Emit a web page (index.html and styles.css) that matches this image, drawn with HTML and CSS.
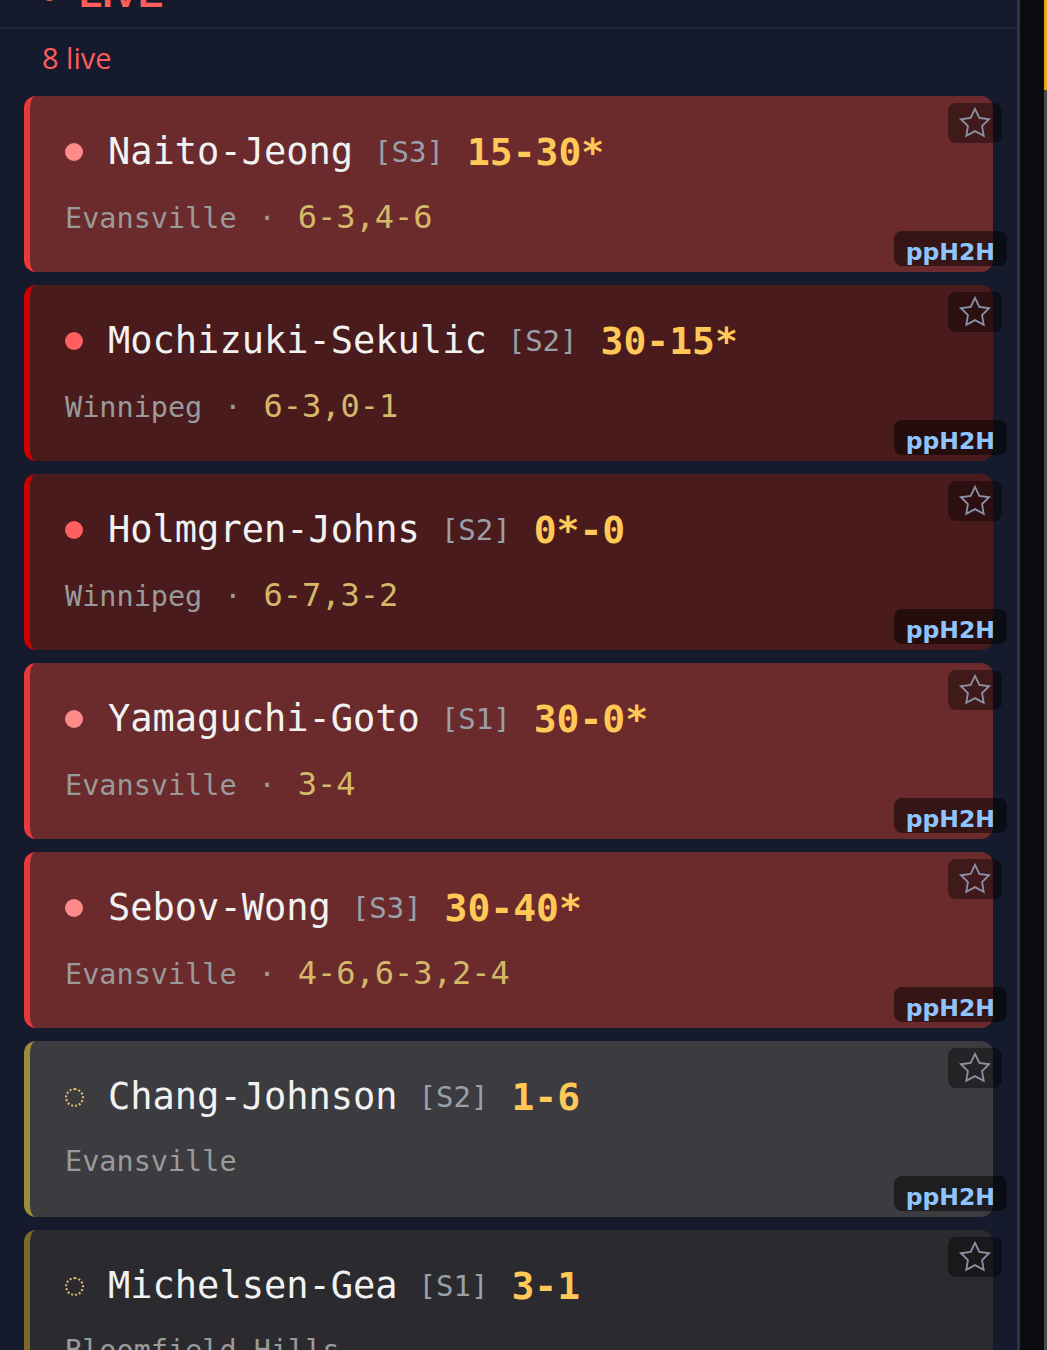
FILE: index.html
```html
<!DOCTYPE html>
<html lang="en">
<head>
  <meta charset="UTF-8">
  <meta name="viewport" content="width=device-width, initial-scale=1.0">
  <title>Live matches</title>
  <link rel="stylesheet" href="styles.css">
</head>
<body>
  <div class="panel">
    <header class="live-header">
      <span class="header-dot"></span>
      <span class="header-title">LIVE</span>
    </header>

    <div class="live-count">8 live</div>

    <div class="match-list">
      <div class="match live">
        <div class="match-title">
          <span class="dot"></span>
          <span class="teams">Naito-Jeong</span>
          <span class="set">[S3]</span>
          <span class="score">15-30*</span>
        </div>
        <div class="match-info">
          <span class="city">Evansville</span>
          <span class="sep">·</span>
          <span class="sets">6-3,4-6</span>
        </div>
        <button class="fav"><svg viewBox="0 0 24 24" width="36" height="36"><polygon points="12 2.6 14.9 8.6 21.4 9.5 16.7 14 17.8 20.5 12 17.4 6.2 20.5 7.3 14 2.6 9.5 9.1 8.6"/></svg></button>
        <div class="badge">ppH2H</div>
      </div>

      <div class="match live dark">
        <div class="match-title">
          <span class="dot"></span>
          <span class="teams">Mochizuki-Sekulic</span>
          <span class="set">[S2]</span>
          <span class="score">30-15*</span>
        </div>
        <div class="match-info">
          <span class="city">Winnipeg</span>
          <span class="sep">·</span>
          <span class="sets">6-3,0-1</span>
        </div>
        <button class="fav"><svg viewBox="0 0 24 24" width="36" height="36"><polygon points="12 2.6 14.9 8.6 21.4 9.5 16.7 14 17.8 20.5 12 17.4 6.2 20.5 7.3 14 2.6 9.5 9.1 8.6"/></svg></button>
        <div class="badge">ppH2H</div>
      </div>

      <div class="match live dark">
        <div class="match-title">
          <span class="dot"></span>
          <span class="teams">Holmgren-Johns</span>
          <span class="set">[S2]</span>
          <span class="score">0*-0</span>
        </div>
        <div class="match-info">
          <span class="city">Winnipeg</span>
          <span class="sep">·</span>
          <span class="sets">6-7,3-2</span>
        </div>
        <button class="fav"><svg viewBox="0 0 24 24" width="36" height="36"><polygon points="12 2.6 14.9 8.6 21.4 9.5 16.7 14 17.8 20.5 12 17.4 6.2 20.5 7.3 14 2.6 9.5 9.1 8.6"/></svg></button>
        <div class="badge">ppH2H</div>
      </div>

      <div class="match live">
        <div class="match-title">
          <span class="dot"></span>
          <span class="teams">Yamaguchi-Goto</span>
          <span class="set">[S1]</span>
          <span class="score">30-0*</span>
        </div>
        <div class="match-info">
          <span class="city">Evansville</span>
          <span class="sep">·</span>
          <span class="sets">3-4</span>
        </div>
        <button class="fav"><svg viewBox="0 0 24 24" width="36" height="36"><polygon points="12 2.6 14.9 8.6 21.4 9.5 16.7 14 17.8 20.5 12 17.4 6.2 20.5 7.3 14 2.6 9.5 9.1 8.6"/></svg></button>
        <div class="badge">ppH2H</div>
      </div>

      <div class="match live">
        <div class="match-title">
          <span class="dot"></span>
          <span class="teams">Sebov-Wong</span>
          <span class="set">[S3]</span>
          <span class="score">30-40*</span>
        </div>
        <div class="match-info">
          <span class="city">Evansville</span>
          <span class="sep">·</span>
          <span class="sets">4-6,6-3,2-4</span>
        </div>
        <button class="fav"><svg viewBox="0 0 24 24" width="36" height="36"><polygon points="12 2.6 14.9 8.6 21.4 9.5 16.7 14 17.8 20.5 12 17.4 6.2 20.5 7.3 14 2.6 9.5 9.1 8.6"/></svg></button>
        <div class="badge">ppH2H</div>
      </div>

      <div class="match pending">
        <div class="match-title">
          <span class="dot"></span>
          <span class="teams">Chang-Johnson</span>
          <span class="set">[S2]</span>
          <span class="score">1-6</span>
        </div>
        <div class="match-info">
          <span class="city">Evansville</span>
        </div>
        <button class="fav"><svg viewBox="0 0 24 24" width="36" height="36"><polygon points="12 2.6 14.9 8.6 21.4 9.5 16.7 14 17.8 20.5 12 17.4 6.2 20.5 7.3 14 2.6 9.5 9.1 8.6"/></svg></button>
        <div class="badge">ppH2H</div>
      </div>

      <div class="match pending dark">
        <div class="match-title">
          <span class="dot"></span>
          <span class="teams">Michelsen-Gea</span>
          <span class="set">[S1]</span>
          <span class="score">3-1</span>
        </div>
        <div class="match-info">
          <span class="city">Bloomfield Hills</span>
        </div>
        <button class="fav"><svg viewBox="0 0 24 24" width="36" height="36"><polygon points="12 2.6 14.9 8.6 21.4 9.5 16.7 14 17.8 20.5 12 17.4 6.2 20.5 7.3 14 2.6 9.5 9.1 8.6"/></svg></button>
        <div class="badge">ppH2H</div>
      </div>
    </div>
  </div>

  <div class="gutter"></div>
  <div class="scrollbar"><div class="thumb"></div></div>
</body>
</html>
```

FILE: styles.css
```css
body {
  margin: 0;
  padding: 0;
  height: 1350px;
  overflow: hidden;
  display: flex;
  background-color: #0a0b0e;
  font-family: "Open Sans", "Noto Sans", sans-serif;
}

.panel {
  width: 1017px;
  flex-shrink: 0;
  background-color: #151a2c;
  border-right: 3px solid #29324f;
  overflow: hidden;
}

.gutter {
  flex: 1;
}

.scrollbar {
  width: 3px;
  background-color: #4a4a4c;
}

.scrollbar .thumb {
  height: 90px;
  background-color: #e0a81c;
}

/* header is scrolled mostly out of view */
.live-header {
  display: flex;
  align-items: center;
  gap: 22px;
  margin-top: -26px;
  padding: 0 42px 13px;
  border-bottom: 2px solid #1f2538;
  line-height: 40px;
}

.header-dot {
  width: 15px;
  height: 15px;
  margin-top: -2px;
  border-radius: 50%;
  background-color: #ff5c5c;
}

.header-title {
  font-family: "Liberation Sans", sans-serif;
  font-weight: bold;
  font-size: 38px;
  color: #ff5c5c;
}

.live-count {
  padding: 11px 42px 0;
  font-size: 29px;
  line-height: 36px;
  color: #ff5c5c;
}

.match-list {
  display: flex;
  flex-direction: column;
  gap: 13px;
  padding: 20px 24px;
}

.match {
  position: relative;
  height: 176px;
  box-sizing: border-box;
  padding: 34px 40px 38px 35px;
  border-left: 6px solid #e83a3a;
  border-radius: 12px;
  background-color: #6b2b2d;
  font-family: "DejaVu Sans Mono", monospace;
}

.match.live.dark {
  background-color: #4a1b1d;
  border-left-color: #cc0000;
}

.match.pending {
  background-color: #3c3b40;
  border-left-color: #9c8b3a;
}

.match.pending.dark {
  background-color: #2b2a2f;
  border-left-color: #7d6a2b;
}

.match-title {
  display: flex;
  align-items: center;
  height: 44px;
  line-height: 44px;
  white-space: nowrap;
}

.dot {
  width: 18px;
  height: 18px;
  flex-shrink: 0;
  margin-right: 25px;
  border-radius: 50%;
  background-color: #ff8a8a;
}

.match.live.dark .dot {
  background-color: #ff5f5f;
}

.match.pending .dot {
  width: 15px;
  height: 15px;
  background: none;
  border: 2px dotted #e2c66e;
  margin-right: 24px;
}

.teams {
  font-size: 37px;
  color: #f2f2f2;
}

.set {
  margin-left: 21px;
  font-size: 29px;
  color: #9aa0aa;
}

.score {
  margin-left: 23px;
  font-size: 38px;
  font-weight: bold;
  color: #ffc857;
}

.match-info {
  display: flex;
  align-items: baseline;
  gap: 22px;
  margin-top: 26px;
  font-size: 28.5px;
  line-height: 34px;
  white-space: nowrap;
}

.city,
.sep {
  color: #9a9a9a;
}

.sets {
  font-size: 32px;
  color: #d4b86a;
}

.fav {
  position: absolute;
  top: 7px;
  right: -9px;
  width: 54px;
  height: 40px;
  padding: 0;
  border: none;
  border-radius: 8px;
  background-color: rgba(0, 0, 0, 0.4);
  display: flex;
  align-items: center;
  justify-content: center;
  cursor: pointer;
}

.fav svg {
  fill: none;
  stroke: #8b90a5;
  stroke-width: 1.2;
  stroke-linejoin: miter;
}

.badge {
  position: absolute;
  bottom: 6px;
  right: -14px;
  height: 35px;
  box-sizing: border-box;
  padding: 7px 12px 0;
  border-radius: 8px;
  background-color: rgba(0, 0, 0, 0.5);
  font-family: "DejaVu Sans", sans-serif;
  font-weight: bold;
  font-size: 23.5px;
  line-height: 28px;
  color: #8ec5ff;
}
```
